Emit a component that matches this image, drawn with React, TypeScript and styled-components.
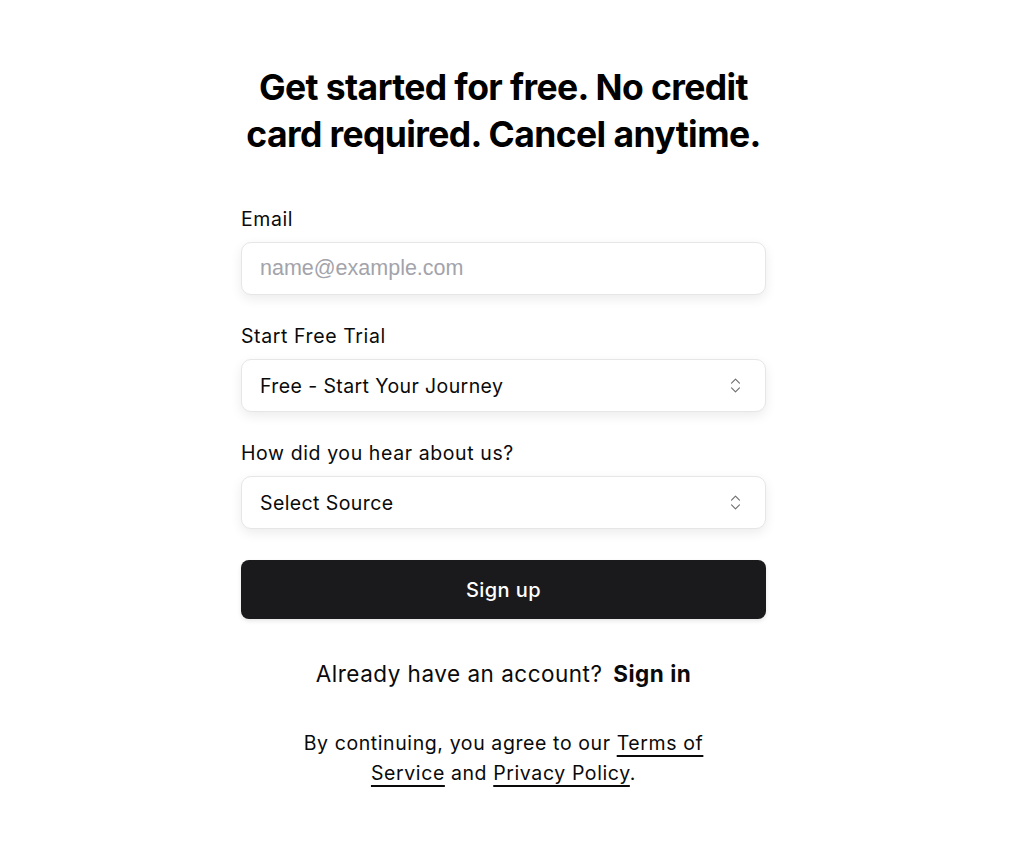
import { createGlobalStyle } from 'styled-components';
import styled from 'styled-components';
import { ChevronsUpDown } from 'lucide-react';

const GlobalStyle = createGlobalStyle`
  body {
    margin: 0;
    background: #ffffff;
    font-family: Inter, "Noto Sans", sans-serif;
    color: #0a0a0a;
  }
`;

export default function App() {
  return (
    <>
      <GlobalStyle />
      <Page>
        <Form>
          <Heading>Get started for free. No credit card required. Cancel anytime.</Heading>
          <Fields>
            <Field>
              <Label>Email</Label>
              <Input placeholder="name@example.com" />
            </Field>
            <Field>
              <Label>Start Free Trial</Label>
              <Select>
                <span>Free - Start Your Journey</span>
                <ChevronsUpDown size={19} color="#6e6e6e" strokeWidth={1.4} />
              </Select>
            </Field>
            <Field>
              <Label>How did you hear about us?</Label>
              <Select>
                <span>Select Source</span>
                <ChevronsUpDown size={19} color="#6e6e6e" strokeWidth={1.4} />
              </Select>
            </Field>
          </Fields>
          <Button>Sign up</Button>
          <SignIn>
            Already have an account? <strong>Sign in</strong>
          </SignIn>
          <Legal>
            By continuing, you agree to our <LegalLink>Terms of Service</LegalLink> and{' '}
            <LegalLink>Privacy Policy</LegalLink>.
          </Legal>
        </Form>
      </Page>
    </>
  );
}

const Page = styled.div`
  display: flex;
  justify-content: center;
  padding: 64px 10px 0 0;
`;

const Form = styled.div`
  width: 525px;
  display: flex;
  flex-direction: column;
  align-items: stretch;
`;

const Heading = styled.h1`
  margin: 0 auto;
  max-width: 525px;
  text-align: center;
  font-size: 35.5px;
  line-height: 47px;
  font-weight: 700;
  letter-spacing: -0.6px;
  color: #000;
`;

const Fields = styled.div`
  margin-top: 49px;
  display: flex;
  flex-direction: column;
  gap: 29px;
`;

const Field = styled.div`
  display: flex;
  flex-direction: column;
  gap: 11px;
`;

const Label = styled.label`
  font-size: 19.5px;
  line-height: 24px;
  letter-spacing: 0.6px;
  color: #0a0a0a;
`;

const boxStyles = `
  box-sizing: border-box;
  height: 53px;
  width: 100%;
  border: 1px solid #e6e6e6;
  border-radius: 10px;
  background: #fff;
  box-shadow: 0 4px 12px rgba(0, 0, 0, 0.08);
  padding: 0 18px;
`;

const Input = styled.input`
  ${boxStyles}
  font-family: "Liberation Sans", Arial, sans-serif;
  font-size: 21.5px;
  color: #111;
  outline: none;
  &::placeholder {
    color: #a3a3ab;
  }
`;

const Select = styled.div`
  ${boxStyles}
  display: flex;
  align-items: center;
  justify-content: space-between;
  padding-right: 20px;
  font-size: 19.5px;
  letter-spacing: 0.4px;
  color: #0a0a0a;
`;

const Button = styled.button`
  margin-top: 31px;
  height: 59px;
  border: none;
  border-radius: 8px;
  background: #1a1a1c;
  color: #fff;
  font-family: Inter, "Noto Sans", sans-serif;
  font-size: 20px;
  font-weight: 500;
  letter-spacing: 0.4px;
  box-shadow: 0 2px 4px rgba(0, 0, 0, 0.1);
  cursor: pointer;
`;

const SignIn = styled.p`
  margin: 40px 0 0;
  text-align: center;
  font-size: 22.5px;
  line-height: 30px;
  letter-spacing: 0.5px;

  strong {
    font-weight: 700;
    margin-left: 4px;
  }
`;

const Legal = styled.p`
  margin: 39px auto 0;
  max-width: 420px;
  text-align: center;
  font-size: 19.5px;
  line-height: 30px;
  letter-spacing: 0.6px;
`;

const LegalLink = styled.a`
  color: #0a0a0a;
  text-decoration: underline;
  text-decoration-thickness: 2px;
  text-underline-offset: 5px;
  cursor: pointer;
`;
